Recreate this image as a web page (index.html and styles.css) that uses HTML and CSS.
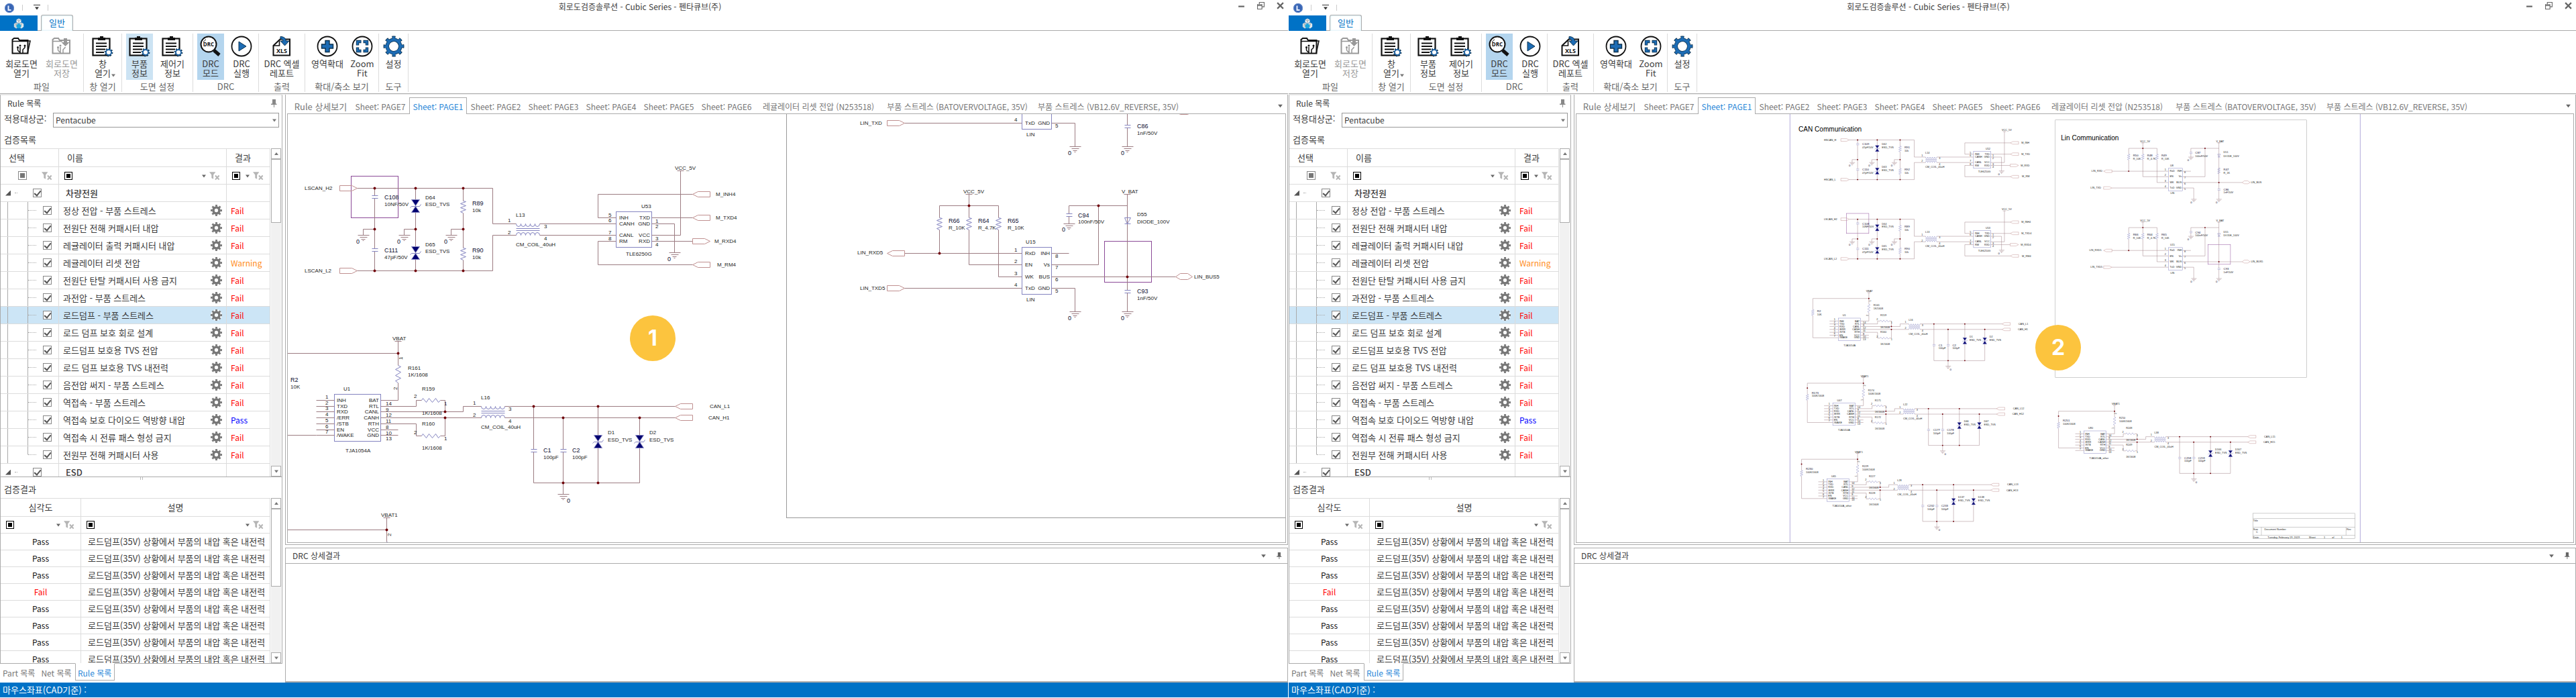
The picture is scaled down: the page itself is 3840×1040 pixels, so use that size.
FILE: index.html
```html
<!DOCTYPE html>
<html lang="ko">
<head>
<meta charset="utf-8">
<meta name="viewport" content="width=device-width, initial-scale=1">
<title>회로도검증솔루션 - Cubic Series</title>
<link rel="stylesheet" href="styles.css">
</head>
<body>
<svg class="sprite" aria-hidden="true">
  <symbol id="i-logo" viewBox="0 0 16 16"><circle cx="8" cy="8" r="7" fill="#3a66b4"/><circle cx="8" cy="8" r="6.400" fill="none" stroke="#6c92d2" stroke-width="1.200" stroke-dasharray="1 1"/><path d="M6.500 4.500v6.500h4" fill="none" stroke="#e8f0ff" stroke-width="2"/></symbol>
  <symbol id="i-cube" viewBox="0 0 16 16"><path d="M8 .5l3.500 2v3.500L8 8 4.500 6V2.500z" fill="#f1f4f6"/><path d="M4 6.500l3.700 2v5L4 15.500.800 13V8.500z" fill="#cfd6da"/><path d="M12 6.500l3.200 2V13L12 15.500l-3.700-2v-5z" fill="#e4e9ec"/><path d="M8 8l3.500 2v3.500L8 15.500 4.500 13.500V10z" fill="#1ba6dc"/><path d="M8 .5V8M4.500 2.500L8 4.500l3.500-2M4 6.500v4.500M12 6.500v4.500" fill="none" stroke="#8f9aa0" stroke-width=".8"/></symbol>
  <symbol id="i-caret" viewBox="0 0 8 8"><path d="M1 2.500h6L4 6.500z" fill="currentColor"/></symbol>
  <symbol id="i-up" viewBox="0 0 8 8"><path d="M1 6h6L4 2z" fill="currentColor"/></symbol>
  <symbol id="i-pin" viewBox="0 0 10 12"><path d="M3 0h5v6.500h1.500V8H6v4H5V8H1V6.500h2z" fill="currentColor"/></symbol>
  <symbol id="i-filter" viewBox="0 0 18 14"><path d="M0 1h10L6.500 5.500V12l-3-1.500v-5z" fill="currentColor"/><path d="M9.500 6.500l6 6.500M15.500 6.500l-6 6.500" stroke="currentColor" stroke-width="2.200"/></symbol>
  <symbol id="i-folder" viewBox="0 0 32 32"><path d="M2.500 26.500V6l2.500-2h6l2 3h12.500v19.500z" fill="none" stroke="currentColor" stroke-width="2"/><path d="M3 8.500h22M25 26.500l4-18.500h-3" fill="none" stroke="currentColor" stroke-width="1.600"/><path d="M14 26v-9M18 26v-5l3-3v-2M10.500 22v-4M10.500 22l3 3" fill="none" stroke="currentColor" stroke-width="1.500"/><circle cx="14" cy="15" r="1.500" fill="currentColor"/><circle cx="10.500" cy="17.500" r="1.500" fill="currentColor"/><circle cx="21" cy="15" r="1.500" fill="currentColor"/></symbol>
  <symbol id="i-save" viewBox="0 0 32 32"><path d="M2.500 26.500V6l2.500-2h6l2 3h15v19.500z" fill="none" stroke="currentColor" stroke-width="2"/><path d="M3 8.500h14" fill="none" stroke="currentColor" stroke-width="1.600"/><path d="M14 26v-9M18 26v-5l3-3v-1M10.500 22v-4M10.500 22l3 3" fill="none" stroke="currentColor" stroke-width="1.500"/><circle cx="14" cy="15" r="1.500" fill="currentColor"/><circle cx="10.500" cy="17.500" r="1.500" fill="currentColor"/><path d="M19 4h5v6h3.500l-6 6-6-6H19z" fill="currentColor"/></symbol>
  <symbol id="i-list" viewBox="0 0 32 32"><rect x="1.500" y="4.500" width="25" height="25" fill="#fff" stroke="#111" stroke-width="2.200"/><path d="M9 7V3h3V1h5v2h3v4z" fill="#111"/><path d="M6 11.500h16M6 16h16M6 20.500h14M6 25h12" stroke="#111" stroke-width="1.800"/><circle cx="25" cy="25" r="5.200" fill="none" stroke="#0d3350" stroke-width="2.400" pathLength="16" stroke-dasharray="1 1"/><circle cx="25" cy="25" r="4" fill="#fff" stroke="#1d62a3" stroke-width="1.900"/></symbol>
  <symbol id="i-drc" viewBox="0 0 32 32"><path d="M21 22l8 7" stroke="#111" stroke-width="5"/><circle cx="13" cy="13" r="11.500" fill="#fff" stroke="#111" stroke-width="2"/><path d="M5.500 10c.5-2 2-3.500 3.500-4" fill="none" stroke="#111"/><text class="glyph" x="13" y="16" text-anchor="middle" font-size="8">DRC</text></symbol>
  <symbol id="i-run" viewBox="0 0 32 32"><circle cx="16" cy="16" r="14.500" fill="#fff" stroke="#111" stroke-width="1.800"/><path d="M12 9l11 7-11 7z" fill="#1d6cb4" stroke="#0d3350"/></symbol>
  <symbol id="i-xls" viewBox="0 0 32 32"><path d="M3.500 29.500V15l10-9.500h14.500v24z" fill="#fff" stroke="#111" stroke-width="2"/><path d="M3.500 15h9V6" fill="none" stroke="#111" stroke-width="1.600"/><path d="M14 1.500c5 0 8 2.500 8.500 6.500h4.500l-6.500 7-6.500-7h4c-.5-2.500-2-3-4-3z" fill="#1d6cb4" stroke="#0d3350"/><text class="glyph" x="16" y="26" text-anchor="middle" font-size="9">XLS</text></symbol>
  <symbol id="i-plus" viewBox="0 0 32 32"><circle cx="16" cy="16" r="14.500" fill="#fff" stroke="#111" stroke-width="1.800"/><path d="M13 7.500h6V13h5.500v6H19v5.500h-6V19H7.500v-6H13z" fill="#1d6cb4" stroke="#0d3350" stroke-width="1.400"/></symbol>
  <symbol id="i-fit" viewBox="0 0 32 32"><circle cx="16" cy="16" r="14.500" fill="#fff" stroke="#111" stroke-width="1.800"/><path d="M9 14.500V9h5.500M17.500 9H23v5.500M23 17.500V23h-5.500M14.500 23H9v-5.500" fill="none" stroke="#0d3350" stroke-width="4.400"/><path d="M9 13.700V9h4.700M18.300 9H23v4.700M23 18.300V23h-4.700M13.700 23H9v-4.700" fill="none" stroke="#1d6cb4" stroke-width="2.600"/></symbol>
  <symbol id="i-set" viewBox="0 0 32 32"><g transform="rotate(-11 16 16)"><circle cx="16" cy="16" r="13" fill="none" stroke="#0d3350" stroke-width="5" pathLength="160" stroke-dasharray="9.500 10.500"/><circle cx="16" cy="16" r="9.700" fill="#fff" stroke="#0d3350" stroke-width="5.400"/><circle cx="16" cy="16" r="12.500" fill="none" stroke="#1d6cb4" stroke-width="4.200" pathLength="160" stroke-dasharray="7 13" stroke-dashoffset="-1.200"/><circle cx="16" cy="16" r="9.700" fill="none" stroke="#1d6cb4" stroke-width="4"/></g></symbol>
  <symbol id="i-gear" viewBox="0 0 16 16"><circle cx="8" cy="8" r="8" fill="#fff" opacity=".8"/><g transform="rotate(-11 8 8)"><circle cx="8" cy="8" r="6.700" fill="none" stroke="#777" stroke-width="2.600" pathLength="16" stroke-dasharray="1 1"/></g><circle cx="8" cy="8" r="4.200" fill="none" stroke="#777" stroke-width="3.400"/></symbol>
</svg>

<main class="workspace">
  <section class="window" data-view="detail" data-badge="1" data-part-info="on" aria-label="확대 보기"></section>
  <section class="window" data-view="sheet" data-badge="2" data-part-info="off" aria-label="전체 보기"></section>
</main>

<template id="window-template">
  <header class="titlebar">
    <div class="quick"><svg class="logo"><use href="#i-logo"/></svg><i class="vr"></i><button class="quick-more" aria-label="빠른 실행 메뉴"><svg><use href="#i-caret"/></svg></button><i class="vr"></i></div>
    <h1 class="title">회로도검증솔루션 - Cubic Series - 펜타큐브(주)</h1>
    <div class="controls">
      <button aria-label="최소화"><svg viewBox="0 0 10 10"><path d="M1 6h8" stroke-width="2"/></svg></button>
      <button aria-label="이전 크기로"><svg viewBox="0 0 10 10"><path d="M.5 3.500h6v6h-6zM3 3V.5h6.500v6H7M.5 5h6"/></svg></button>
      <button aria-label="닫기"><svg viewBox="0 0 10 10"><path d="M1 1l8 8M9 1L1 9" stroke-width="2"/></svg></button>
    </div>
  </header>
  <nav class="ribbon-tabs">
    <button class="file" aria-label="파일 메뉴"><svg><use href="#i-cube"/></svg></button>
    <a class="ribbon-tab" href="#general">일반</a>
  </nav>
  <div class="ribbon">
    <div class="group g-file"><div class="tools">
      <button class="tool"><svg><use href="#i-folder"/></svg>회로도면<br>열기</button>
      <button class="tool" disabled><svg><use href="#i-save"/></svg>회로도면<br>저장</button>
    </div><h2>파일</h2></div>
    <div class="group g-window"><div class="tools">
      <button class="tool"><svg><use href="#i-list"/></svg>창<br><span class="drop">열기<svg><use href="#i-caret"/></svg></span></button>
    </div><h2>창 열기</h2></div>
    <div class="group g-sheet"><div class="tools">
      <button class="tool part-info"><svg><use href="#i-list"/></svg>부품<br>정보</button>
      <button class="tool"><svg><use href="#i-list"/></svg>제어기<br>정보</button>
    </div><h2>도면 설정</h2></div>
    <div class="group g-drc"><div class="tools">
      <button class="tool pressed"><svg><use href="#i-drc"/></svg>DRC<br>모드</button>
      <button class="tool"><svg><use href="#i-run"/></svg>DRC<br>실행</button>
    </div><h2>DRC</h2></div>
    <div class="group g-print"><div class="tools">
      <button class="tool"><svg><use href="#i-xls"/></svg>DRC 엑셀<br>레포트</button>
    </div><h2>출력</h2></div>
    <div class="group g-zoom"><div class="tools">
      <button class="tool"><svg><use href="#i-plus"/></svg>영역확대</button>
      <button class="tool"><svg><use href="#i-fit"/></svg>Zoom<br>Fit</button>
    </div><h2>확대/축소 보기</h2></div>
    <div class="group g-tool"><div class="tools">
      <button class="tool"><svg><use href="#i-set"/></svg>설정</button>
    </div><h2>도구</h2></div>
  </div>
  <div class="body">
    <aside class="side">
      <div class="side-panel">
        <div class="panel-head"><h2>Rule 목록</h2><button class="pin" aria-label="고정"><svg><use href="#i-pin"/></svg></button></div>
        <label class="target"><span>적용대상군:</span><span class="combo"><select><option>Pentacube</option></select><svg><use href="#i-caret"/></svg></span></label>
        <h3 class="list-title">검증목록</h3>
        <div class="grid-box rules">
          <div class="grid-view">
            <table class="grid">
              <colgroup><col class="c-pick"><col><col class="c-result"></colgroup>
              <thead>
                <tr><th>선택</th><th>이름</th><th>결과</th></tr>
                <tr class="filters">
                  <td><div class="filter"><input class="tri" type="checkbox" aria-label="선택 필터"><button class="clear" aria-label="필터 지우기"><svg><use href="#i-filter"/></svg></button></div></td>
                  <td><div class="filter"><button class="cond" aria-label="이름 조건"></button><button class="more" aria-label="이름 목록"><svg><use href="#i-caret"/></svg></button><button class="clear" aria-label="필터 지우기"><svg><use href="#i-filter"/></svg></button></div></td>
                  <td><div class="filter"><button class="cond" aria-label="결과 조건"></button><button class="more" aria-label="결과 목록"><svg><use href="#i-caret"/></svg></button><button class="clear" aria-label="필터 지우기"><svg><use href="#i-filter"/></svg></button></div></td>
                </tr>
              </thead>
              <tbody class="rule-rows"></tbody>
            </table>
          </div>
          <div class="scroll"><button aria-label="위로"><svg><use href="#i-up"/></svg></button><i class="thumb"></i><button aria-label="아래로"><svg><use href="#i-caret"/></svg></button></div>
        </div>
        <div class="splitter"></div>
        <h3 class="list-title">검증결과</h3>
        <div class="grid-box results">
          <div class="grid-view">
            <table class="grid">
              <colgroup><col class="c-level"><col></colgroup>
              <thead>
                <tr><th>심각도</th><th>설명</th></tr>
                <tr class="filters">
                  <td><div class="filter"><button class="cond" aria-label="심각도 조건"></button><button class="more" aria-label="심각도 목록"><svg><use href="#i-caret"/></svg></button><button class="clear" aria-label="필터 지우기"><svg><use href="#i-filter"/></svg></button></div></td>
                  <td><div class="filter"><button class="cond" aria-label="설명 조건"></button><button class="more" aria-label="설명 목록"><svg><use href="#i-caret"/></svg></button><button class="clear" aria-label="필터 지우기"><svg><use href="#i-filter"/></svg></button></div></td>
                </tr>
              </thead>
              <tbody class="result-rows"></tbody>
            </table>
          </div>
          <div class="scroll"><button aria-label="위로"><svg><use href="#i-up"/></svg></button><i class="thumb"></i><button aria-label="아래로"><svg><use href="#i-caret"/></svg></button></div>
        </div>
      </div>
      <nav class="side-tabs"><a href="#part">Part 목록</a><a href="#net">Net 목록</a><a class="current" href="#rule">Rule 목록</a></nav>
    </aside>
    <div class="docs">
      <section class="doc-panel">
        <nav class="doc-tabs">
          <a href="#rule-detail">Rule 상세보기</a><a href="#p7">Sheet: PAGE7</a><a class="current" href="#p1">Sheet: PAGE1</a><a href="#p2">Sheet: PAGE2</a><a href="#p3">Sheet: PAGE3</a><a href="#p4">Sheet: PAGE4</a><a href="#p5">Sheet: PAGE5</a><a href="#p6">Sheet: PAGE6</a><a href="#reset">레귤레이터 리셋 전압 (N253518)</a><a href="#over">부품 스트레스 (BATOVERVOLTAGE, 35V)</a><a href="#reverse">부품 스트레스 (VB12.6V_REVERSE, 35V)</a>
          <button class="tab-more" aria-label="탭 목록"><svg><use href="#i-caret"/></svg></button>
        </nav>
        <div class="canvas"><svg class="drawing" role="img" aria-label="PAGE1 회로도"></svg><span class="badge"></span></div>
      </section>
      <section class="drc-panel">
        <div class="drc-head"><h2>DRC 상세결과</h2><button aria-label="메뉴"><svg><use href="#i-caret"/></svg></button><button class="pin" aria-label="고정"><svg><use href="#i-pin"/></svg></button></div>
        <div class="drc-body"></div>
      </section>
    </div>
  </div>
  <footer class="status">마우스좌표(CAD기준) :</footer>
</template>
<script src="app.js"></script>
</body>
</html>
```
FILE: styles.css
```css
* { box-sizing: border-box; }

:root {
  --blue: #0072c6;
  --line: #ababab;
  --soft: #dcdcdc;
  --text: #3c3c3c;
}

body {
  margin: 0;
  background: #fff;
  color: var(--text);
  font: 13px/16px "Noto Sans CJK KR", "Noto Sans", sans-serif;
}

h1, h2, h3 { margin: 0; font-size: 13px; font-weight: 400; }
a { color: inherit; text-decoration: none; }
button { margin: 0; padding: 0; border: 0; background: none; color: inherit; font: inherit; }
svg { display: block; }
.sprite { display: none; }
.glyph { font-family: "Open Sans", sans-serif; font-weight: 700; fill: #111; }

.workspace { display: grid; grid-template-columns: 1fr 1fr; height: 100vh; min-height: 700px; }
.window { display: grid; grid-template-rows: 23px 23px 94px 1fr 22px; min-width: 0; min-height: 0; padding-bottom: 1px; }
.window + .window { margin-left: 1px; }

/* title bar */
.titlebar { display: grid; grid-template-columns: 1fr auto 1fr; align-items: center; }
.quick { display: flex; align-items: center; padding-left: 6px; }
.logo { width: 16px; height: 16px; }
.vr { width: 1px; height: 9px; margin-left: 11px; background: #ccc; }
.quick-more { width: 10px; margin-left: 16px; border-top: 1px solid #333; color: #333; }
.quick-more svg { width: 8px; height: 8px; margin: 0 auto; }
.title { padding: 0 12px 4px 0; font-size: 12px; line-height: 16px; }
.controls { display: flex; justify-content: flex-end; gap: 18px; padding: 0 6px 6px 0; }
.controls svg { width: 11px; height: 11px; fill: none; stroke: #666; }

/* ribbon */
.ribbon-tabs { display: flex; gap: 5px; align-items: flex-end; border-bottom: 1px solid var(--line); }
.file { width: 56px; height: 23px; margin-bottom: -1px; background: var(--blue); }
.file svg { width: 16px; height: 16px; margin: 0 auto; }
.ribbon-tab { width: 48px; height: 24px; margin-bottom: -1px; border: 1px solid var(--line); border-bottom: 0; border-radius: 3px 3px 0 0; background: #fff; color: var(--blue); line-height: 22px; text-align: center; box-shadow: inset 0 0 3px #bfe6f2; }
.ribbon { display: flex; padding: 4px 0 2px; border-bottom: 1px solid var(--line); }
.group { display: flex; flex-direction: column; justify-content: space-between; border-right: 1px solid var(--soft); }
.group h2 { color: #666; text-align: center; line-height: 16px; white-space: nowrap; }
.tools { display: flex; justify-content: center; align-items: flex-start; }
.tool { flex: none; min-width: 40px; padding: 3px 0; line-height: 14px; text-align: center; }
.tool > svg { width: 32px; height: 32px; margin: 0 auto 3px; color: #111; }
.tool:disabled, .tool:disabled > svg { color: #999; }
.pressed { background: #b4d5ee; }
.part-info.on { background: #cce3f3; }
.drop { display: inline-flex; align-items: flex-end; margin-left: 4px; }
.drop svg { width: 8px; height: 8px; margin-right: -4px; color: #777; }
.g-file { width: 125px; }
.g-file .tools { gap: 12px; }
.g-window { width: 57px; }
.g-sheet { width: 106px; }
.g-sheet .tools { justify-content: flex-start; gap: 9px; padding-left: 6px; }
.g-drc { width: 98px; }
.g-drc .tools { justify-content: flex-start; gap: 6px; padding-left: 6px; }
.g-print { width: 69px; }
.g-zoom { width: 110px; }
.g-zoom .tools { gap: 8px; padding-left: 5px; }
.g-tool { width: 44px; }

/* side column */
.body { display: grid; grid-template-columns: 421px 1fr; gap: 4px; min-height: 0; border-top: 1px solid #ececec; }
.side { display: flex; flex-direction: column; min-height: 0; }
.side-panel { flex: 1; display: flex; flex-direction: column; min-height: 0; border: 1px solid var(--line); border-top-color: #e4e4e4; }
.panel-head { display: flex; justify-content: space-between; align-items: center; height: 24px; padding: 0 7px 0 10px; }
.panel-head h2, .drc-head h2 { font-size: 12px; }
.pin { color: #888; }
.pin svg { width: 10px; height: 12px; }
.target { display: flex; gap: 10px; height: 32px; padding: 2px 4px 0 5px; }
.target > span:first-child { width: 63px; padding-top: 1px; white-space: nowrap; }
.combo { position: relative; flex: 1; }
.combo select { width: 100%; height: 22px; padding: 0 3px; appearance: none; border: 1px solid #999; border-radius: 0; background: #fff; color: var(--text); font: inherit; font-size: 12px; }
.combo svg { position: absolute; right: 3px; top: 7px; width: 8px; height: 8px; color: #777; }
.list-title { padding: 2px 0 0 5px; height: 23px; }
.grid-box { display: flex; gap: 1px; min-height: 0; }
.rules { flex: 490 1 0; border-bottom: 1px solid var(--line); }
.results { flex: 247 1 0; }
.grid-view { flex: 1; min-width: 0; overflow: hidden; border-top: 1px solid var(--soft); }
.grid { width: 100%; table-layout: fixed; border-collapse: separate; border-spacing: 0; }
.grid th, .grid td { height: 26px; padding: 0; border: solid var(--soft); border-width: 0 1px 1px 0; font-weight: 400; text-align: left; white-space: nowrap; overflow: hidden; }
.grid th { height: 27px; padding: 0 12px; }
.c-pick { width: 87px; }
.c-result { width: 65px; }
.c-level { width: 120px; }
.filter { display: flex; align-items: center; padding: 0 8px; }
.filter button { flex: none; }
.cond { width: 12px; height: 12px; }
.filter .cond { padding: 2px; border: 1px solid #000; background: #000; background-clip: content-box; }
.more { margin-left: auto; }
.more svg { width: 8px; height: 8px; color: #666; }
.clear { margin-left: 4px; color: #b5b5b5; }
.clear svg { width: 17px; height: 14px; }
.rules td:first-child .filter { justify-content: space-between; padding-left: 26px; }
.rules tbody td { padding: 0 6px; font-size: 12px; }
.rules tbody th { padding: 0 10px; font-weight: 500; height: 26px; }
.rules tbody tr.item th { padding: 0 6px; font-weight: 400; }
.rule-name { display: flex; justify-content: space-between; align-items: center; }
.rule-name svg { width: 17px; height: 17px; }
.rules tbody td.tree { padding: 0; }
.branch { display: flex; align-items: center; gap: 10px; height: 25px; padding-left: 41px; background: linear-gradient(#aaa, #aaa) 10px 0 / 1px 100% no-repeat, linear-gradient(#aaa, #aaa) 40px 0 / 1px 100% no-repeat; }
.item:nth-last-child(2) .branch { background-size: 1px 100%, 1px 50%; }
.dots { width: 12px; border-top: 1px dotted #aaa; }
.root { display: flex; align-items: center; gap: 6px; height: 25px; padding-left: 7px; }
.root .corner { width: 8px; height: 8px; background: #555; clip-path: polygon(100% 0, 100% 100%, 0 100%); }
.root .dots { width: 4px; margin-right: 17px; }
.selected td, .selected th { background: #cce5f6; }
.fail { color: #f00; }
.warning { color: #ff8c1a; }
.pass { color: #00f; }

input[type="checkbox"] { flex: none; appearance: none; width: 13px; height: 13px; margin: 0; border: 1px solid #888; background: #fff; display: grid; place-content: center; }
input:checked::before { content: ""; width: 4px; height: 8px; margin-bottom: 2px; border: solid #555; border-width: 0 2px 2px 0; transform: rotate(40deg); }
input.tri::before { content: ""; width: 7px; height: 7px; background: #777; }

.results th { text-align: center; }
.results tbody td, .results .filters td { height: 25px; }
.results tbody td:first-child { text-align: center; font-size: 12px; }
.results tbody td:first-child:not(.fail) { color: #111; }
.results tbody td:last-child { padding-left: 10px; }
.clip { display: block; margin-right: 8px; overflow: hidden; }

.scroll { width: 16px; display: flex; flex-direction: column; justify-content: space-between; background: #f1f1f1; border-right: 1px solid #fff; }
.scroll button { height: 16px; border: 1px solid var(--line); background: #fff; color: #777; display: grid; place-content: center; }
.scroll svg { width: 8px; height: 8px; }
.thumb { flex: none; height: 95px; margin-bottom: auto; border: 1px solid var(--line); background: #fff; }
.results .thumb { height: 116px; }
.splitter { width: 4px; height: 4px; margin: 0 auto 2px; border: solid #bbb; border-width: 0 1px; }
.splitter + .list-title { height: 25px; padding-top: 4px; }
.side-tabs { display: flex; height: 28px; padding-left: 4px; gap: 9px; color: #777; font-size: 12px; line-height: 27px; }
.side-tabs a { white-space: nowrap; }
.side-tabs .current { width: 59px; height: 26px; margin: -1px 0 0 -4px; border: 1px solid var(--line); border-top-color: #fff; background: #fff; color: #2b88d8; text-align: center; }

/* document column */
.docs { display: flex; flex-direction: column; gap: 4px; min-width: 0; min-height: 0; }
.doc-panel { flex: 673 1 0; display: flex; flex-direction: column; min-height: 0; padding: 0 2px 2px; border: 1px solid var(--line); border-top: 0; }
.doc-tabs { display: flex; height: 28px; padding: 4px 4px 0; color: #777; font-size: 12px; line-height: 25px; }
.doc-tabs a { flex: none; width: 86px; border: 1px solid transparent; border-width: 1px 1px 0; text-align: center; white-space: nowrap; }
.doc-tabs a:first-child { width: 92px; font-size: 13px; }
.doc-tabs a:nth-child(9) { width: 188px; }
.doc-tabs a:nth-child(10) { width: 226px; }
.doc-tabs a:nth-child(11) { width: 224px; }
.doc-tabs .current { position: relative; z-index: 1; margin-bottom: -1px; border-color: var(--line); background: #fff; color: #2b88d8; }
.tab-more { margin-left: auto; }
.tab-more svg { width: 9px; height: 9px; color: #666; }
.canvas { position: relative; flex: 1; min-height: 0; overflow: hidden; border: 1px solid var(--line); }
.drawing { position: absolute; inset: 0; width: 100%; height: 100%; }
.badge { position: absolute; width: 68px; height: 68px; border-radius: 50%; background: #fcc43e; color: #fff; font: 700 32px/68px Inter, sans-serif; text-align: center; }
[data-view="detail"] .badge { left: 510px; top: 300px; }
[data-view="sheet"] .badge { left: 684px; top: 314px; }
.drc-panel { flex: 199 1 0; display: flex; flex-direction: column; border: 1px solid var(--line); border-bottom-width: 2px; min-height: 0; }
.drc-head { display: flex; align-items: center; gap: 14px; height: 23px; padding: 0 8px 0 10px; border-bottom: 1px solid var(--line); }
.drc-head h2 { margin-right: auto; }
.drc-head button svg { height: 10px; width: 9px; color: #666; }
.status { padding-left: 4px; background: var(--blue); color: #fff; line-height: 22px; }

/* schematic */
.drawing text { font-family: "Liberation Sans", Arial, sans-serif; font-size: 8px; fill: #222; }
.drawing .ref { font-size: 9px; fill: #0c0c30; }
.drawing .heading { font-size: 21px; fill: #000; }
.drawing .end { text-anchor: end; }
.drawing path, .drawing rect { fill: none; stroke-width: 1; }
.drawing .wire { stroke: #9c7c82; }
.drawing .port { stroke: #c09090; }
.drawing .part { stroke: #8484c0; }
.drawing .mark { stroke: #8b4a97; }
.drawing .frame { stroke: #999; }
.drawing .page { stroke: #b0a8d8; stroke-width: 2; }
.drawing .solid { fill: #000070; }
.drawing .dot { fill: #700008; }
```
FILE: app.js
```js
// ---- grid data -------------------------------------------------------
const rules = [
  ['정상 전압 - 부품 스트레스', 'Fail'],
  ['전원단 전해 커패시터 내압', 'Fail'],
  ['레귤레이터 출력 커패시터 내압', 'Fail'],
  ['레귤레이터 리셋 전압', 'Warning'],
  ['전원단 탄탈 커패시터 사용 금지', 'Fail'],
  ['과전압 - 부품 스트레스', 'Fail'],
  ['로드덤프 - 부품 스트레스', 'Fail', true],
  ['로드 덤프 보호 회로 설계', 'Fail'],
  ['로드덤프 보호용 TVS 전압', 'Fail'],
  ['로드 덤프 보호용 TVS 내전력', 'Fail'],
  ['음전압 써지 - 부품 스트레스', 'Fail'],
  ['역접속 - 부품 스트레스', 'Fail'],
  ['역접속 보호 다이오드 역방향 내압', 'Pass'],
  ['역접속 시 전류 패스 형성 금지', 'Fail'],
  ['전원부 전해 커패시터 사용', 'Fail'],
];
const results = ['Pass', 'Pass', 'Pass', 'Fail', 'Pass', 'Pass', 'Pass', 'Pass'];

const groupRow = name => `<tr><td class="tree"><div class="root"><span class="corner"></span><span class="dots"></span><input type="checkbox" checked aria-label="${name}"></div></td><th scope="row">${name}</th><td></td></tr>`;
const ruleRow = ([name, result, selected]) => `<tr class="item${selected ? ' selected' : ''}"><td class="tree"><div class="branch"><span class="dots"></span><input type="checkbox" checked aria-label="${name}"></div></td><th scope="row"><div class="rule-name">${name}<button aria-label="설정"><svg><use href="#i-gear"/></svg></button></div></th><td class="${result.toLowerCase()}">${result}</td></tr>`;
const resultRow = level => `<tr><td class="${level === 'Fail' ? 'fail' : ''}">${level}</td><td><span class="clip">로드덤프(35V) 상황에서 부품의 내압 혹은 내전력을</span></td></tr>`;

// ---- schematic primitives --------------------------------------------
// Labels that fall outside the visible part of the sheet are not emitted.
let ox = 0, oy = 0, visible = null;
const X = v => Math.floor(v + ox) + 0.5;
const Y = v => Math.floor(v + oy) + 0.5;
const shown = (x, y) => x >= visible.left && x <= visible.right && y >= visible.top && y <= visible.bottom;
const path = (cls, ...pts) => `<path class="${cls}" d="M${pts.map(([x, y]) => `${X(x)} ${Y(y)}`).join('L')}"/>`;
const wire = (...pts) => path('wire', ...pts);
const text = (x, y, s, cls = '') => shown(x + ox, y + oy) ? `<text x="${Math.round(x + ox)}" y="${Math.round(y + oy)}" class="${cls}">${s}</text>` : '';
const dots = (...pts) => pts.map(([x, y]) => `<circle class="dot" cx="${X(x)}" cy="${Y(y)}" r="2"/>`).join('');
const box = (cls, x1, y1, x2, y2) => `<rect class="${cls}" x="${X(x1)}" y="${Y(y1)}" width="${Math.round(x2 - x1)}" height="${Math.round(y2 - y1)}"/>`;
const turned = (x, y, s) => shown(x + ox, y + oy) ? `<text transform="translate(${Math.round(x + ox)} ${Math.round(y + oy)}) rotate(-90)">${s}</text>` : '';

const ground = (x, y) => wire([x - 8, y], [x + 9, y]) + wire([x - 5, y + 3], [x + 6, y + 3]) + wire([x - 3, y + 6], [x + 3, y + 6]) + wire([x - 1, y + 8], [x + 1, y + 8]);
const plates = (x, y) => path('part', [x - 4, y], [x + 5, y]) + path('part', [x - 4, y + 4], [x + 5, y + 4]);
const rail = (x, y) => wire([x - 5, y], [x + 5, y]);
function zigV(x, y, h = 18) {
  const s = h / 6, pts = [[x, y]];
  for (let i = 0; i < 6; i++) pts.push([x + (i % 2 ? -4 : 4), y + s * (i + 0.5)]);
  pts.push([x, y + h]);
  return path('part', ...pts);
}
function zigH(x, y, w = 28) {
  const s = w / 6, pts = [[x, y]];
  for (let i = 0; i < 6; i++) pts.push([x + s * (i + 0.5), y + (i % 2 ? 3 : -3)]);
  pts.push([x + w, y]);
  return path('part', ...pts);
}
const tvs = (x, y) => `<path class="part solid" d="M${X(x) - 6} ${Y(y)}h12l-6 9zM${X(x) - 6} ${Y(y) + 19}h12l-6 -9z"/><path class="part" d="M${X(x) - 8} ${Y(y) + 12}l2 -2h12l2 -3"/>`;
const coil = (x, y) => {
  const bumps = sweep => `a3.5 4 0 0 ${sweep} 7 0`.repeat(5);
  return `<path class="part" d="M${X(x)} ${Y(y)}${bumps(0)}M${X(x)} ${Y(y + 17)}${bumps(1)}M${X(x)} ${Y(y + 7)}h35M${X(x)} ${Y(y + 10)}h35"/>`;
};
const portL = (x, y) => path('port', [x, y], [x + 8, y - 4], [x + 26, y - 4], [x + 26, y + 4], [x + 8, y + 4], [x, y]);
const portR = (x, y) => path('port', [x, y], [x - 8, y - 4], [x - 26, y - 4], [x - 26, y + 4], [x - 8, y + 4], [x, y]);

// CAN transceiver block with line protection
function can(dy, n) {
  ox = 0; oy = dy;
  let s = '';
  [[280, n.h], [403, n.l]].forEach(([y, label]) => { s += portR(532, y) + text(454, y + 3, label); });
  s += wire([532, 280], [734, 280], [734, 333], [769, 333]) + wire([532, 403], [734, 403], [734, 350], [769, 350]);
  s += wire([558, 280], [558, 291]) + wire([558, 295], [558, 370]) + wire([558, 374], [558, 403]) + plates(558, 291) + plates(558, 370);
  s += wire([619, 280], [619, 403]) + tvs(619, 297) + tvs(619, 367);
  s += wire([690, 280], [690, 299]) + zigV(690, 299) + wire([690, 317], [690, 369]) + zigV(690, 369) + wire([690, 387], [690, 403]);
  [[558, 541, 531], [619, 602, 592], [690, 672, 662]].forEach(([x, g, t]) => {
    s += wire([x, 341], [g, 341], [g, 350]) + ground(g, 350) + text(t, 363, '0', 'ref') + dots([x, 280], [x, 341], [x, 403]);
  });
  s += text(573, 297, n.c[0], 'ref') + text(573, 307, n.cv) + text(634, 297, n.d[0]) + text(634, 307, 'ESD_TVS') + text(704, 306, n.r[0], 'ref') + text(704, 316, '10k');
  s += text(573, 376, n.c[1], 'ref') + text(573, 386, '47pF/50V') + text(634, 367, n.d[1]) + text(634, 377, 'ESD_TVS') + text(704, 376, n.r[1], 'ref') + text(704, 386, '10k');
  s += coil(769, 333) + text(769, 323, n.coil) + text(757, 331, '1') + text(757, 349, '2') + text(811, 340, '3') + text(811, 358, '4') + text(769, 367, 'CM_COIL_40uH');
  s += wire([804, 333], [918, 333]) + wire([804, 350], [918, 350]) + box('part', 918, 315, 971, 368);
  [['INH', 327], ['CANH', 336], ['CANL', 353], ['RM', 362]].forEach(([t, y]) => { s += text(923, y, t); });
  [['TXD', 327], ['GND', 336], ['VCC', 353], ['RXD', 362]].forEach(([t, y]) => { s += text(969, y, t, 'end'); });
  [['5', 323], ['6', 331], ['7', 349], ['8', 358]].forEach(([t, y]) => { s += text(907, y, t); });
  [['1', 332], ['2', 340], ['3', 358], ['4', 367]].forEach(([t, y]) => { s += text(977, y, t); });
  s += text(956, 310, n.u) + text(933, 381, 'TLE6250G') + text(1006, 253, 'VCC_5V') + rail(1014, 254);
  s += wire([918, 324], [891, 324], [891, 289], [1032, 289]) + wire([918, 359], [891, 359], [891, 394], [1032, 394]);
  s += wire([971, 324], [1032, 324]) + wire([971, 359], [1032, 359]) + wire([971, 333], [1005, 333], [1005, 376]) + ground(1005, 376) + text(995, 389, '0', 'ref') + wire([971, 350], [1014, 350], [1014, 254]);
  s += portL(1032, 289) + portL(1032, 324) + portR(1058, 359) + portL(1032, 394);
  s += text(1067, 292, n.io[0]) + text(1067, 327, n.io[1]) + text(1065, 362, n.io[2]) + text(1069, 397, n.io[3]);
  return s;
}

// TJA1054A block
function tja(dx, dy, n) {
  ox = dx; oy = dy;
  const wake = n.toEn ? 640 : 648;
  const first = n.bat === 'VBAT';
  let s = text(585, 507, n.bat) + rail(593, 508) + wire([593, 508], [593, 544]) + wire([593, 526], [419, 526], [419, 561]) + zigV(419, 561) + wire([419, 579], [419, wake], [471, wake]);
  s += dots([593, 526]) + turned(600, 536, first ? '1' : '2') + turned(592, 581, first ? '2' : '1') + zigV(593, 544, 26) + wire([593, 570], [593, 596], [567, 596]);
  s += text(433, first ? 569 : 559, n.r[0], 'ref') + text(433, first ? 579 : 569, n.rv[0]) + text(608, 551, n.r[1]) + text(608, 561, n.rv[1]);
  if (!first) s += dots([419, 541]);
  s += box('part', 498, 587, 567, 657) + text(512, 582, n.u) + text(515, 674, n.type);
  const pins = [596, 605, 613, 622, 631, 640, 648];
  const left = ['INH', 'TXD', 'RXD', '/ERR', '/STB', 'EN', '/WAKE'];
  const right = ['BAT', 'RTL', 'CANL', 'CANH', 'RTH', 'VCC', 'GND'];
  const num = [14, 9, 12, 11, 8, 10, 13];
  pins.forEach((y, i) => {
    s += wire([471, y], [498, y]) + text(502, y + 3, left[i]) + text(565, y + 3, right[i], 'end') + text(485, y - 2, i + 1) + text(575, y + 8, num[i]);
  });
  s += wire([567, 605], [620, 605], [620, 596], [628, 596]) + zigH(628, 596) + wire([656, 596], [663, 596], [663, 613]);
  s += wire([567, 613], [690, 613], [690, 605], [717, 605]) + wire([567, 622], [717, 622]);
  s += wire([567, 631], [620, 631], [620, 649], [628, 649]) + zigH(628, 649) + wire([656, 649], [663, 649], [663, 622]);
  s += wire([567, 640], [593, 640]) + wire([567, 648], [593, 648]) + dots([663, 613], [663, 622]);
  s += text(629, 582, n.r[2]) + text(617, 593, '2') + text(662, 604, '1') + text(629, 618, '1K/1608') + text(629, 634, n.r[3]) + text(617, 647, '2') + text(662, 656, '1') + text(629, 670, '1K/1608');
  s += coil(717, 605) + text(717, 595, n.coil) + text(705, 603, '1') + text(705, 621, '2') + text(758, 612, '3') + text(758, 630, '4') + text(717, 639, 'CM_COIL_40uH');
  s += wire([752, 605], [1006, 605]) + wire([752, 622], [1006, 622]);
  s += wire([795, 605], [795, 669]) + plates(795, 669) + wire([795, 673], [795, 719], [953, 719]);
  s += wire([839, 622], [839, 669]) + plates(839, 669) + wire([839, 673], [839, 736]) + ground(839, 736) + text(845, 749, '0', 'ref');
  s += wire([891, 605], [891, 719]) + wire([953, 622], [953, 719]) + tvs(891, 648) + tvs(953, 648);
  s += dots([795, 605], [891, 605], [839, 622], [953, 622], [839, 719], [891, 719]);
  s += text(810, 674, n.c[0], 'ref') + text(810, 684, '100pF') + text(853, 674, n.c[1], 'ref') + text(853, 684, '100pF');
  s += text(906, 647, n.d[0]) + text(906, 658, 'ESD_TVS') + text(968, 647, n.d[1]) + text(968, 658, 'ESD_TVS');
  return s + portL(1006, 605) + portL(1006, 622) + text(1058, 608, n.io[0]) + text(1056, 625, n.io[1]);
}

// LIN transceiver block
function lin(dy, n) {
  ox = 0; oy = dy;
  let s = text(1436, 288, 'VCC_5V') + rail(1444, 289) + wire([1444, 289], [1444, 324]) + wire([1400, 324], [1400, 306], [1488, 306], [1488, 324]);
  [1400, 1444, 1488].forEach((x, i) => { s += zigV(x, 324) + text(x + 14, 332, n.r[i], 'ref') + text(x + 14, 342, ['R_10K', 'R_4.7K', 'R_10K'][i]); });
  s += wire([1400, 342], [1400, 377]) + wire([1444, 342], [1444, 394], [1523, 394]) + wire([1488, 342], [1488, 412], [1523, 412]);
  s += wire([1348, 377], [1523, 377]) + wire([1348, 429], [1523, 429]) + portL(1322, 377) + portR(1348, 429) + text(n.x, 379, n.io[0]) + text(1282, 432, n.io[1]);
  s += box('part', 1523, 368, 1567, 438) + text(1529, 363, n.u) + text(1530, 449, 'LIN');
  [377, 394, 412, 429].forEach((y, i) => {
    s += text(1528, y + 3, ['RxD', 'EN', 'WK', 'TxD'][i]) + text(1565, y + 3, ['INH', 'Vs', 'BUS', 'GND'][i], 'end') + text(1512, y - 2, i + 1) + text(1573, y + 7, 8 - i);
  });
  s += wire([1567, 377], [1593, 377]) + wire([1567, 394], [1637, 394], [1637, 306]) + wire([1567, 412], [1752, 412]) + wire([1567, 429], [1602, 429], [1602, 464]) + ground(1602, 464) + text(1592, 477, '0', 'ref');
  s += text(1672, 288, 'V_BAT') + rail(1680, 289) + wire([1680, 289], [1680, 432]) + wire([1680, 306], [1593, 306], [1593, 318]) + plates(1593, 318) + wire([1593, 322], [1593, 333]) + ground(1593, 333) + text(1583, 345, '0', 'ref');
  s += text(1607, 324, n.c[0], 'ref') + text(1607, 333, '100nF/50V') + path('part', [1676, 324], [1685, 324], [1680, 333], [1676, 324]) + path('part', [1676, 333], [1685, 333]) + text(1695, 322, n.d) + text(1695, 333, 'DIODE_100V');
  if (n.series) s += zigV(1680, 367) + text(1695, 375, n.series, 'ref') + text(1695, 385, 'R_1K');
  s += plates(1680, 432) + wire([1680, 436], [1680, 464]) + ground(1680, 464) + text(1671, 477, '0', 'ref') + text(1695, 437, n.c[1], 'ref') + text(1695, 447, '1nF/50V');
  s += dots([1444, 306], [1400, 377], [1637, 306], [1680, 412]);
  return s + path('port', [1752, 412], [1759, 407], [1770, 407], [1777, 412], [1770, 416], [1759, 416], [1752, 412]) + text(1780, 415, n.io[2]);
}

function sheet(bounds) {
  visible = bounds;
  let s = '';
  ox = oy = 0;
  s += path('page', [348, -100], [348, 1400]) + path('page', [2119, -100], [2119, 1400]) + box('frame', 1172, -28, 1953, 771);
  s += text(375, 8, 'CAN Communication', 'heading') + text(1190, 36, 'Lin Communication', 'heading');
  s += box('mark', 523, 262, 593, 324) + box('mark', 1646, 359, 1716, 420);
  s += can(-246, { h: 'HSCAN_H', l: 'HSCAN_L', c: ['C109', 'C110'], cv: '47pF/50V', d: ['D62', 'D63'], r: ['R91', 'R92'], coil: 'L14', u: 'U52', io: ['M_INH', 'M_TXD', 'M_RXD', 'M_RM'] });
  s += can(0, { h: 'LSCAN_H2', l: 'LSCAN_L2', c: ['C108', 'C111'], cv: '10NF/50V', d: ['D64', 'D65'], r: ['R89', 'R90'], coil: 'L13', u: 'U53', io: ['M_INH4', 'M_TXD4', 'M_RXD4', 'M_RM4'] });
  s += tja(0, 0, { bat: 'VBAT', r: ['R2', 'R161', 'R159', 'R160'], rv: ['10K', '1K/1608'], u: 'U1', type: 'TJA1054A', coil: 'L16', c: ['C1', 'C2'], d: ['D1', 'D2'], io: ['CAN_L1', 'CAN_H1'] });
  s += tja(-17, 263, { bat: 'VBAT1', r: ['R173', 'R174', 'R171', 'R172'], rv: ['100K/1608', '100K/1608'], u: 'U47', type: 'TJA1054A', coil: 'L22', c: ['C177', 'C178'], d: ['D66', 'D67'], io: ['CAN_L12', 'CAN_H12'] });
  s += tja(-35, 499, { bat: 'VBAT1', r: ['R230', 'R229', 'R227', 'R228'], rv: ['100K/1608', '100K/1608'], u: 'U65', type: 'TJA1054A_other', coil: 'L28', c: ['C232', 'C233'], d: ['D137', 'D138'], io: ['CAN_L13', 'CAN_H13'] });
  s += tja(763, 350, { bat: 'VBAT1', toEn: true, r: ['R251', 'R250', 'R248', 'R249'], rv: ['100K/1608', '100K/1608'], u: 'U80', type: 'TJA1054A_other', coil: 'L38', c: ['C258', 'C259'], d: ['D166', 'D167'], io: ['CAN_L15', 'CAN_H15'] });
  s += lin(-246, { x: 1285, r: ['R50', 'R48', 'R49'], io: ['LIN_RXD', 'LIN_TXD', 'LIN_BUS'], u: 'U8', c: ['C87', 'C86'], d: 'D51', series: 'R47' });
  s += lin(0, { x: 1278, r: ['R66', 'R64', 'R65'], io: ['LIN_RXD5', 'LIN_TXD5', 'LIN_BUS5'], u: 'U15', c: ['C94', 'C93'], d: 'D55' });
  ox = oy = 0;
  s += box('frame', 1786, 1193, 2103, 1271) + path('frame', [1786, 1209], [2103, 1209]) + path('frame', [1786, 1236], [2103, 1236]) + path('frame', [1786, 1261], [2103, 1261]) + path('frame', [1812, 1236], [1812, 1261]) + path('frame', [2075, 1236], [2075, 1261]);
  [[1787, 1218, 'Title'], [1787, 1245, 'Size'], [1796, 1255, 'C'], [1822, 1245, 'Document Number'], [2077, 1245, 'Rev'], [1787, 1270, 'Date:'], [1832, 1270, 'Tuesday, February 19, 2019'], [1960, 1270, 'Sheet'], [2006, 1270, '1'], [2032, 1270, 'of'], [2060, 1270, '1']].forEach(a => { s += text(...a); });
  return s;
}

// ---- windows ---------------------------------------------------------
const views = {
  detail: { transform: 'translate(-429 -170)', bounds: { left: 429, right: 1916, top: 174, bottom: 816 } },
  sheet: { transform: 'translate(151 22) scale(.48)', bounds: { left: 0, right: 2800, top: -100, bottom: 1400 } },
};
document.querySelectorAll('.window').forEach(win => {
  const view = views[win.dataset.view];
  win.append(document.getElementById('window-template').content.cloneNode(true));
  win.querySelector('.rule-rows').innerHTML = groupRow('차량전원') + rules.map(ruleRow).join('') + groupRow('ESD');
  win.querySelector('.result-rows').innerHTML = results.map(resultRow).join('');
  win.querySelector('.part-info').classList.toggle('on', win.dataset.partInfo === 'on');
  win.querySelector('.badge').textContent = win.dataset.badge;
  win.querySelector('.drawing').innerHTML = `<g transform="${view.transform}">${sheet(view.bounds)}</g>`;
});
```
